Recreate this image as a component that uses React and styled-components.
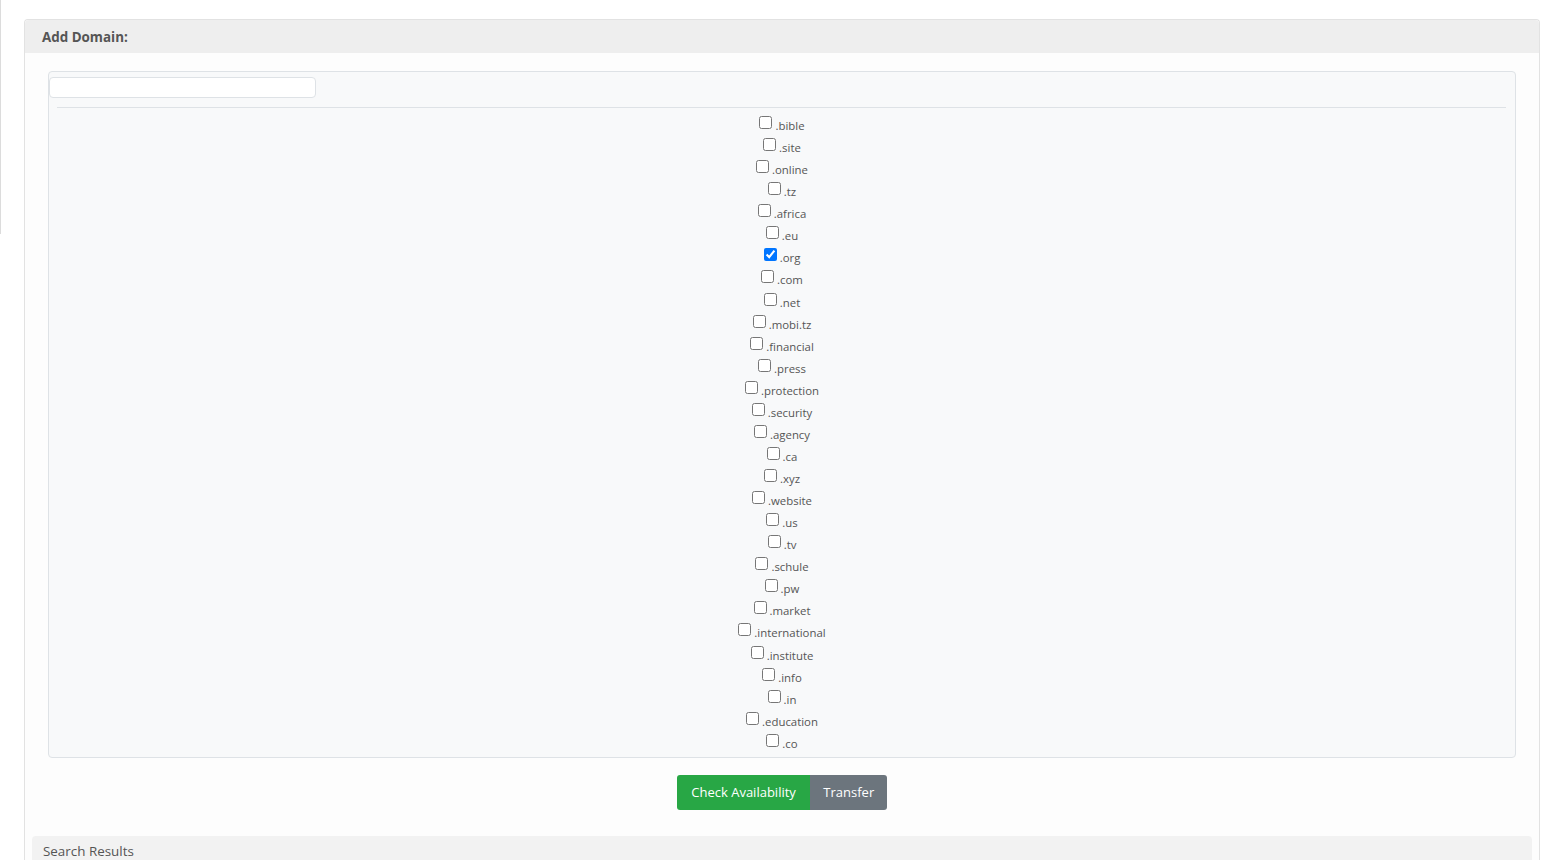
import React from "react";
import styled, { createGlobalStyle } from "styled-components";

const Global = createGlobalStyle`
  html, body { margin: 0; padding: 0; background: #fff; }
  body { font-family: "Open Sans", "Noto Sans", sans-serif; color: #555; overflow: hidden; }
  * { box-sizing: border-box; }
`;

const Page = styled.div`
  display: flex;
  align-items: flex-start;
  width: 1558px;
  height: 860px;
  overflow: hidden;
`;

const SideEdge = styled.div`
  width: 1px;
  height: 234px;
  background: #dcdcdc;
  flex: none;
`;

const Main = styled.div`
  flex: 1;
  padding: 19px 18px 0 23px;
`;

const Card = styled.section`
  border: 1px solid #e2e2e2;
  border-bottom: none;
  border-radius: 4px 4px 0 0;
  background: #fdfdfd;
`;

const CardHeader = styled.div`
  height: 33px;
  background: #eeeeee;
  border-radius: 4px 4px 0 0;
  padding: 0 17px;
  display: flex;
  align-items: center;
  font-size: 13.4px;
  font-weight: 700;
  color: #555;
`;

const CardBody = styled.div`
  padding: 18px 23px 0 23px;
`;

const DomainBox = styled.div`
  background: #f8f9fa;
  border: 1px solid #dee2e6;
  border-radius: 4px;
  padding: 5px 0 4px 0;
`;

const SearchInput = styled.input`
  display: block;
  width: 267px;
  height: 21px;
  border: 1px solid #dee2e6;
  border-radius: 4px;
  background: #fff;
  padding: 0 6px;
  outline: none;
`;

const Divider = styled.hr`
  border: none;
  border-top: 1px solid #dee2e6;
  margin: 9px 9px 5px 8px;
`;

const TldList = styled.div`
  display: flex;
  flex-direction: column;
  align-items: center;
  padding-right: 4px;
`;

const TldRow = styled.label`
  display: block;
  height: 22.07px;
  line-height: 22px;
  font-size: 11.4px;
  color: #555;
  white-space: nowrap;

  input {
    margin: 3px 3px 3px 4px;
    vertical-align: 1px;
  }
`;

const ButtonBar = styled.div`
  display: flex;
  justify-content: center;
  margin-top: 17px;
`;

const Btn = styled.button`
  height: 35px;
  border: none;
  padding: 0 ${(p) => (p.$variant === "success" ? "14.5px" : "13px")};
  font-family: "Open Sans", "Noto Sans", sans-serif;
  font-size: 13px;
  color: #fff;
  background: ${(p) => (p.$variant === "success" ? "#28a745" : "#6c757d")};
  border-radius: ${(p) => (p.$variant === "success" ? "3px 0 0 3px" : "0 3px 3px 0")};
  cursor: pointer;
`;

const ResultsBar = styled.div`
  margin: 26px 7px 0 7px;
  height: 40px;
  background: #f2f2f2;
  border-radius: 4px 4px 0 0;
  padding: 6px 11px;
  font-size: 13.4px;
  color: #555;
`;

const tlds = [
  "bible", "site", "online", "tz", "africa", "eu", "org", "com", "net",
  "mobi.tz", "financial", "press", "protection", "security", "agency", "ca",
  "xyz", "website", "us", "tv", "schule", "pw", "market", "international",
  "institute", "info", "in", "education", "co",
];

export default function App() {
  return (
    <>
      <Global />
      <Page>
        <SideEdge />
        <Main>
          <Card>
            <CardHeader>Add Domain:</CardHeader>
            <CardBody>
              <DomainBox>
                <SearchInput type="text" />
                <Divider />
                <TldList>
                  {tlds.map((t) => (
                    <TldRow key={t}>
                      <input type="checkbox" defaultChecked={t === "org"} />.{t}
                    </TldRow>
                  ))}
                </TldList>
              </DomainBox>
              <ButtonBar>
                <Btn $variant="success">Check Availability</Btn>
                <Btn>Transfer</Btn>
              </ButtonBar>
            </CardBody>
            <ResultsBar>Search Results</ResultsBar>
          </Card>
        </Main>
      </Page>
    </>
  );
}
